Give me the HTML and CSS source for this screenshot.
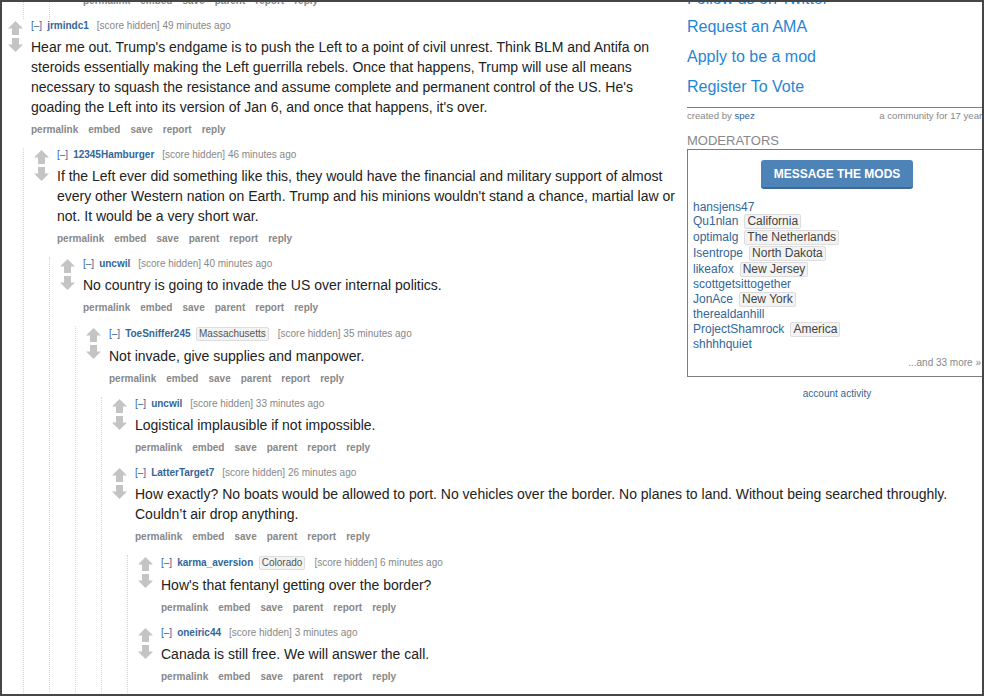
FILE: index.html
```html
<!DOCTYPE html>
<html lang="en">
<head>
<meta charset="utf-8">
<title>Comments</title>
<link rel="stylesheet" href="styles.css">
</head>
<body>
<div class="frame">
  <div class="content">
    <aside class="side">
      <div class="side-links">
        <a class="first">Follow us on Twitter</a>
        <a>Request an AMA</a>
        <a>Apply to be a mod</a>
        <a>Register To Vote</a>
      </div>
      <div class="side-meta">
        <span>created by <a class="user">spez</a></span>
        <span>a community for 17 years</span>
      </div>
      <h2 class="side-heading">MODERATORS</h2>
      <div class="mod-box">
        <a class="mod-button">MESSAGE THE MODS</a>
        <ul class="mod-list">
          <li class="mod top"><a>hansjens47</a></li>
          <li class="mod has-flair"><a>Qu1nlan</a><span class="flair">California</span></li>
          <li class="mod has-flair"><a>optimalg</a><span class="flair">The Netherlands</span></li>
          <li class="mod has-flair"><a>Isentrope</a><span class="flair">North Dakota</span></li>
          <li class="mod has-flair"><a>likeafox</a><span class="flair">New Jersey</span></li>
          <li class="mod"><a>scottgetsittogether</a></li>
          <li class="mod has-flair"><a>JonAce</a><span class="flair">New York</span></li>
          <li class="mod"><a>therealdanhill</a></li>
          <li class="mod has-flair"><a>ProjectShamrock</a><span class="flair">America</span></li>
          <li class="mod"><a>shhhhquiet</a></li>
        </ul>
        <div class="mod-more">...and 33 more »</div>
      </div>
      <div class="account-activity"><a>account activity</a></div>
    </aside>

    <div class="main">
      <!-- tail of the previous thread -->
      <div class="comment">
        <div class="child">
          <div class="comment">
            <div class="child">
              <div class="comment">
                <div class="entry-row">
                  <div class="midcol"></div>
                  <div class="entry">
                    <ul class="buttons frag"><li>permalink</li><li>embed</li><li>save</li><li>parent</li><li>report</li><li>reply</li></ul>
                  </div>
                </div>
              </div>
            </div>
          </div>
        </div>
      </div>

      <div class="comment">
        <div class="entry-row">
          <div class="midcol">
            <svg class="arrow" viewBox="0 0 15 14" width="15" height="14"><path d="M7.5 0 L15 7.5 L11 7.5 L11 14 L4 14 L4 7.5 L0 7.5 Z"/></svg>
            <svg class="arrow" viewBox="0 0 15 14" width="15" height="14"><path d="M7.5 14 L15 6.5 L11 6.5 L11 0 L4 0 L4 6.5 L0 6.5 Z"/></svg>
          </div>
          <div class="entry">
            <p class="tagline"><a class="expand">[–]</a><a class="author">jrmindc1</a><span class="score">[score hidden] 49 minutes ago</span></p>
            <div class="md"><p>Hear me out. Trump's endgame is to push the Left to a point of civil unrest. Think BLM and Antifa on steroids essentially making the Left guerrilla rebels. Once that happens, Trump will use all means necessary to squash the resistance and assume complete and permanent control of the US. He's goading the Left into its version of Jan 6, and once that happens, it's over.</p></div>
            <ul class="buttons"><li>permalink</li><li>embed</li><li>save</li><li>report</li><li>reply</li></ul>
          </div>
        </div>
        <div class="child">
          <div class="comment">
            <div class="entry-row">
              <div class="midcol">
                <svg class="arrow" viewBox="0 0 15 14" width="15" height="14"><path d="M7.5 0 L15 7.5 L11 7.5 L11 14 L4 14 L4 7.5 L0 7.5 Z"/></svg>
                <svg class="arrow" viewBox="0 0 15 14" width="15" height="14"><path d="M7.5 14 L15 6.5 L11 6.5 L11 0 L4 0 L4 6.5 L0 6.5 Z"/></svg>
              </div>
              <div class="entry">
                <p class="tagline"><a class="expand">[–]</a><a class="author">12345Hamburger</a><span class="score">[score hidden] 46 minutes ago</span></p>
                <div class="md"><p>If the Left ever did something like this, they would have the financial and military support of almost every other Western nation on Earth. Trump and his minions wouldn't stand a chance, martial law or not. It would be a very short war.</p></div>
                <ul class="buttons"><li>permalink</li><li>embed</li><li>save</li><li>parent</li><li>report</li><li>reply</li></ul>
              </div>
            </div>
            <div class="child">
              <div class="comment">
                <div class="entry-row">
                  <div class="midcol">
                    <svg class="arrow" viewBox="0 0 15 14" width="15" height="14"><path d="M7.5 0 L15 7.5 L11 7.5 L11 14 L4 14 L4 7.5 L0 7.5 Z"/></svg>
                    <svg class="arrow" viewBox="0 0 15 14" width="15" height="14"><path d="M7.5 14 L15 6.5 L11 6.5 L11 0 L4 0 L4 6.5 L0 6.5 Z"/></svg>
                  </div>
                  <div class="entry">
                    <p class="tagline"><a class="expand">[–]</a><a class="author">uncwil</a><span class="score">[score hidden] 40 minutes ago</span></p>
                    <div class="md"><p>No country is going to invade the US over internal politics.</p></div>
                    <ul class="buttons"><li>permalink</li><li>embed</li><li>save</li><li>parent</li><li>report</li><li>reply</li></ul>
                  </div>
                </div>
                <div class="child">
                  <div class="comment">
                    <div class="entry-row">
                      <div class="midcol">
                        <svg class="arrow" viewBox="0 0 15 14" width="15" height="14"><path d="M7.5 0 L15 7.5 L11 7.5 L11 14 L4 14 L4 7.5 L0 7.5 Z"/></svg>
                        <svg class="arrow" viewBox="0 0 15 14" width="15" height="14"><path d="M7.5 14 L15 6.5 L11 6.5 L11 0 L4 0 L4 6.5 L0 6.5 Z"/></svg>
                      </div>
                      <div class="entry">
                        <p class="tagline has-flair"><a class="expand">[–]</a><a class="author">ToeSniffer245</a><span class="flair">Massachusetts</span><span class="score">[score hidden] 35 minutes ago</span></p>
                        <div class="md"><p>Not invade, give supplies and manpower.</p></div>
                        <ul class="buttons"><li>permalink</li><li>embed</li><li>save</li><li>parent</li><li>report</li><li>reply</li></ul>
                      </div>
                    </div>
                    <div class="child">
                      <div class="comment">
                        <div class="entry-row">
                          <div class="midcol">
                            <svg class="arrow" viewBox="0 0 15 14" width="15" height="14"><path d="M7.5 0 L15 7.5 L11 7.5 L11 14 L4 14 L4 7.5 L0 7.5 Z"/></svg>
                            <svg class="arrow" viewBox="0 0 15 14" width="15" height="14"><path d="M7.5 14 L15 6.5 L11 6.5 L11 0 L4 0 L4 6.5 L0 6.5 Z"/></svg>
                          </div>
                          <div class="entry">
                            <p class="tagline"><a class="expand">[–]</a><a class="author">uncwil</a><span class="score">[score hidden] 33 minutes ago</span></p>
                            <div class="md"><p>Logistical implausible if not impossible.</p></div>
                            <ul class="buttons"><li>permalink</li><li>embed</li><li>save</li><li>parent</li><li>report</li><li>reply</li></ul>
                          </div>
                        </div>
                      </div>
                      <div class="comment">
                        <div class="entry-row">
                          <div class="midcol">
                            <svg class="arrow" viewBox="0 0 15 14" width="15" height="14"><path d="M7.5 0 L15 7.5 L11 7.5 L11 14 L4 14 L4 7.5 L0 7.5 Z"/></svg>
                            <svg class="arrow" viewBox="0 0 15 14" width="15" height="14"><path d="M7.5 14 L15 6.5 L11 6.5 L11 0 L4 0 L4 6.5 L0 6.5 Z"/></svg>
                          </div>
                          <div class="entry">
                            <p class="tagline"><a class="expand">[–]</a><a class="author">LatterTarget7</a><span class="score">[score hidden] 26 minutes ago</span></p>
                            <div class="md"><p>How exactly? No boats would be allowed to port. No vehicles over the border. No planes to land. Without being searched throughly. Couldn’t air drop anything.</p></div>
                            <ul class="buttons"><li>permalink</li><li>embed</li><li>save</li><li>parent</li><li>report</li><li>reply</li></ul>
                          </div>
                        </div>
                        <div class="child">
                          <div class="comment">
                            <div class="entry-row">
                              <div class="midcol">
                                <svg class="arrow" viewBox="0 0 15 14" width="15" height="14"><path d="M7.5 0 L15 7.5 L11 7.5 L11 14 L4 14 L4 7.5 L0 7.5 Z"/></svg>
                                <svg class="arrow" viewBox="0 0 15 14" width="15" height="14"><path d="M7.5 14 L15 6.5 L11 6.5 L11 0 L4 0 L4 6.5 L0 6.5 Z"/></svg>
                              </div>
                              <div class="entry">
                                <p class="tagline has-flair"><a class="expand">[–]</a><a class="author">karma_aversion</a><span class="flair">Colorado</span><span class="score">[score hidden] 6 minutes ago</span></p>
                                <div class="md"><p>How's that fentanyl getting over the border?</p></div>
                                <ul class="buttons"><li>permalink</li><li>embed</li><li>save</li><li>parent</li><li>report</li><li>reply</li></ul>
                              </div>
                            </div>
                          </div>
                          <div class="comment">
                            <div class="entry-row">
                              <div class="midcol">
                                <svg class="arrow" viewBox="0 0 15 14" width="15" height="14"><path d="M7.5 0 L15 7.5 L11 7.5 L11 14 L4 14 L4 7.5 L0 7.5 Z"/></svg>
                                <svg class="arrow" viewBox="0 0 15 14" width="15" height="14"><path d="M7.5 14 L15 6.5 L11 6.5 L11 0 L4 0 L4 6.5 L0 6.5 Z"/></svg>
                              </div>
                              <div class="entry">
                                <p class="tagline"><a class="expand">[–]</a><a class="author">oneiric44</a><span class="score">[score hidden] 3 minutes ago</span></p>
                                <div class="md"><p>Canada is still free. We will answer the call.</p></div>
                                <ul class="buttons"><li>permalink</li><li>embed</li><li>save</li><li>parent</li><li>report</li><li>reply</li></ul>
                              </div>
                            </div>
                          </div>
                        </div>
                      </div>
                    </div>
                  </div>
                </div>
              </div>
            </div>
          </div>
        </div>
      </div>
    </div>
  </div>
</div>
</body>
</html>
```

FILE: styles.css
```css
html, body {
  margin: 0;
  padding: 0;
  background: #ffffff;
}

body {
  font-family: "Liberation Sans", Arial, sans-serif;
  color: #222222;
}

.frame {
  width: 984px;
  height: 696px;
  box-sizing: border-box;
  border: 2px solid #464646;
  overflow: hidden;
  background: #ffffff;
}

.content {
  width: 985px;
  margin-top: -17px;
}

/* ---------- sidebar ---------- */
.side {
  float: right;
  width: 300px;
  margin-left: 5px;
}

.side-links a {
  display: block;
  font-size: 16px;
  line-height: 30px;
  color: #1f86d6;
}

.side-links a.first {
  line-height: 27px;
}

.side-meta {
  margin-top: 5px;
  border-top: 1px solid #7d7d7d;
  padding-top: 2px;
  display: flex;
  justify-content: space-between;
  font-size: 9.6px;
  line-height: 12px;
  color: #888888;
  white-space: nowrap;
}

.side-meta .user {
  color: #369;
}

.side-heading {
  margin: 11px 0 0;
  font-size: 13px;
  line-height: 16px;
  font-weight: normal;
  color: #888888;
}

.mod-box {
  border: 1px solid #7d7d7d;
  padding: 0 5px 7px;
}

.mod-button {
  display: block;
  width: fit-content;
  margin: 10px auto 0;
  padding: 7px 13px 6px;
  background: #4e83b8;
  border-bottom: 2px solid #3b6a98;
  border-radius: 3px;
  color: #ffffff;
  font-weight: bold;
  font-size: 12px;
  line-height: 14px;
}

.mod-list {
  list-style: none;
  margin: 12px 0 0;
  padding: 0;
  font-size: 12px;
  line-height: 14px;
}

.mod {
  display: flex;
  align-items: center;
  height: 14px;
}

.mod.top {
  height: 12px;
}

.mod.has-flair {
  height: 16px;
}

.mod a {
  color: #369;
}

.mod .flair {
  margin-left: 6px;
  font-size: 12px;
  line-height: 13px;
}

.flair {
  display: inline-block;
  background: #f3f3f3;
  border: 1px solid #dddddd;
  border-radius: 2px;
  padding: 0 2px;
  color: #444444;
}

.mod-more {
  margin-top: 6px;
  text-align: right;
  font-size: 10px;
  line-height: 12px;
  color: #888888;
}

.account-activity {
  margin-top: 11px;
  text-align: center;
  font-size: 10px;
  line-height: 12px;
}

.account-activity a {
  color: #369;
}

/* ---------- comments ---------- */
.main {
  padding-top: 9px;
  padding-left: 6px;
}

.child {
  margin-left: 15px;
  border-left: 1px dotted #d4d4ee;
  padding-left: 10px;
}

.entry-row {
  display: flex;
  padding-bottom: 11px;
}

.midcol {
  flex: none;
  width: 15px;
  margin-right: 8px;
  padding-top: 2px;
  display: flex;
  flex-direction: column;
  gap: 3px;
}

.arrow {
  display: block;
  fill: #c4c4c4;
}

.entry {
  flex: 1;
  min-width: 0;
}

.tagline {
  margin: 0;
  display: flex;
  align-items: center;
  height: 14px;
  font-size: 10px;
  line-height: 14px;
  white-space: nowrap;
  color: #888888;
}

.tagline.has-flair {
  height: 16px;
}

.tagline .expand {
  color: #369;
  margin-right: 5px;
}

.tagline .author {
  color: #369;
  font-weight: bold;
  margin-right: 8px;
}

.tagline .flair {
  margin: 0 9px 0 -2.5px;
  font-size: 10px;
  line-height: 12px;
  color: #555555;
}

.tagline .score {
  color: #888888;
}

.md {
  margin-top: 4px;
  max-width: 840px;
  font-size: 14px;
  line-height: 20px;
  color: #222222;
}

.md p {
  margin: 0;
}

.buttons {
  list-style: none;
  margin: 6px 0 0;
  padding: 0;
  display: flex;
  gap: 10px;
  font-size: 10px;
  line-height: 14px;
  font-weight: bold;
  color: #888888;
  white-space: nowrap;
}

.buttons.frag {
  margin-top: 0;
}
```
